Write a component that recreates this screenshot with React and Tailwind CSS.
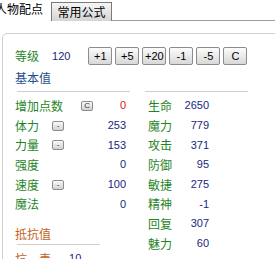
import React from "react";

const CJK = { fontFamily: '"Noto Sans CJK SC", "Noto Sans", sans-serif' };
const NUM = { fontFamily: '"Liberation Sans", Arial, sans-serif' };

function Btn({ children }) {
  return (
    <div
      className="w-[24px] h-[18px] flex items-center justify-center border border-[#8c8c8c] rounded-[2px] bg-gradient-to-b from-[#fcfcfc] to-[#d8d8d8] text-[11px] text-black leading-none"
      style={NUM}
    >
      {children}
    </div>
  );
}

function Mini({ children }) {
  return (
    <div
      className="w-[12px] h-[10px] border border-[#8c8c8c] rounded-[2px] bg-gradient-to-b from-[#fafafa] to-[#d2d2d2] flex items-center justify-center text-[8px] leading-none text-[#333]"
      style={NUM}
    >
      {children}
    </div>
  );
}

function LRow({ label, btn, btnMl, value, red }) {
  return (
    <div className="h-[19.7px] flex items-center">
      <span className="text-[12px] leading-none text-[#1f851f]" style={CJK}>
        {label}
      </span>
      {btn ? (
        <div style={{ marginLeft: btnMl }}>
          <Mini>{btn}</Mini>
        </div>
      ) : null}
      <span
        className={`ml-auto pr-[4px] text-[11px] leading-none ${red ? "text-[#d42020]" : "text-[#1a2680]"}`}
        style={NUM}
      >
        {value}
      </span>
    </div>
  );
}

function RRow({ label, value }) {
  return (
    <div className="h-[19.7px] flex items-center pl-[3px]">
      <span className="text-[12px] leading-none text-[#1f851f]" style={CJK}>
        {label}
      </span>
      <span className="w-[37px] text-right text-[11px] leading-none text-[#1a2680]" style={NUM}>
        {value}
      </span>
    </div>
  );
}

export default function App() {
  return (
    <div className="w-[275px] h-[259px] overflow-hidden bg-white relative">
      {/* tabs */}
      <div className="h-[21px] flex items-end">
        <div className="h-[21px] w-[56px] flex items-center ml-[-5px] pb-[3px]">
          <span className="text-[12px] leading-none text-black whitespace-nowrap" style={CJK}>
            人物配点
          </span>
        </div>
        <div className="h-[19px] w-[61px] border border-b-0 border-[#7a7a7a] bg-gradient-to-b from-[#f6f6f6] to-[#d4d4d4] flex items-center justify-center">
          <span className="text-[12px] leading-none text-black" style={CJK}>
            常用公式
          </span>
        </div>
        <div className="flex-1 h-[1px] bg-[#9c9c9c]"></div>
      </div>

      {/* panel */}
      <div className="mt-[12px] ml-[2px] w-[300px] h-[300px] border border-[#cfcfcf] rounded-tl-[5px] pl-[12px]">
        {/* level row */}
        <div className="mt-[13px] h-[18px] flex items-center">
          <span className="text-[12px] leading-none text-[#1f851f]" style={CJK}>
            等级
          </span>
          <span className="ml-[13px] text-[11px] leading-none text-[#1a2680]" style={NUM}>
            120
          </span>
          <div className="ml-[18px] flex gap-[3px]">
            <Btn>+1</Btn>
            <Btn>+5</Btn>
            <Btn>+20</Btn>
            <Btn>-1</Btn>
            <Btn>-5</Btn>
            <Btn>C</Btn>
          </div>
        </div>

        <div className="mt-[6px] h-[14px] flex items-center text-[12px] leading-none text-[#1f4f8c]" style={CJK}>
          基本值
        </div>

        <div className="mt-[6px] flex items-start">
          {/* left column */}
          <div className="w-[115px]">
            <div className="ml-[2px] border-t border-[#cfcfcf] pt-[4px]">
              <div className="-ml-[2px]">
                <LRow label="增加点数" btn="C" btnMl="18px" value="0" red />
                <LRow label="体力" btn="-" btnMl="13px" value="253" />
                <LRow label="力量" btn="-" btnMl="13px" value="153" />
                <LRow label="强度" value="0" />
                <LRow label="速度" btn="-" btnMl="13px" value="100" />
                <LRow label="魔法" value="0" />
              </div>
            </div>
            <div className="mt-[13px] h-[14px] flex items-center text-[12px] leading-none text-[#c4621e]" style={CJK}>
              抵抗值
            </div>
            <div className="mt-[3px] ml-[2px] w-[83px] border-b border-[#cfcfcf]"></div>
            <div className="mt-[4px] h-[19.7px] flex items-center">
              <span className="text-[12px] leading-none text-[#c4621e] whitespace-pre" style={CJK}>
                抗　毒
              </span>
              <span className="ml-[18px] text-[11px] leading-none text-[#1a2680]" style={NUM}>
                10
              </span>
            </div>
          </div>

          {/* right column */}
          <div className="ml-[15px] w-[103px] border-t border-[#cfcfcf] pt-[4px]">
            <RRow label="生命" value="2650" />
            <RRow label="魔力" value="779" />
            <RRow label="攻击" value="371" />
            <RRow label="防御" value="95" />
            <RRow label="敏捷" value="275" />
            <RRow label="精神" value="-1" />
            <RRow label="回复" value="307" />
            <RRow label="魅力" value="60" />
          </div>
        </div>
      </div>
    </div>
  );
}
